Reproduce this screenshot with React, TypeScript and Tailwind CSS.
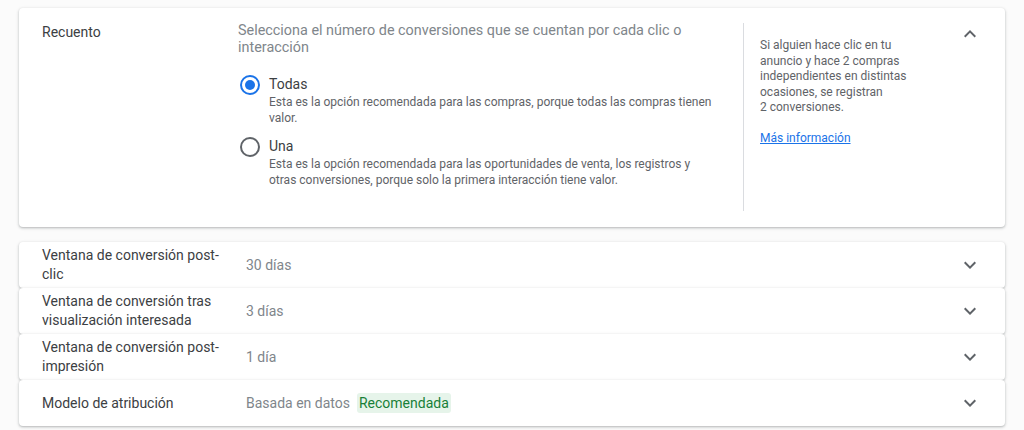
import React from 'react';

const cardShadow = 'shadow-[0_1px_2px_0_rgba(60,64,67,0.25),0_1px_3px_1px_rgba(60,64,67,0.1)]';

function ChevronDown() {
    return (
        <svg width="24" height="24" viewBox="0 0 24 24" className="text-[#5f6368]">
            <path d="M7.41 8.59 12 13.17l4.59-4.58L18 10l-6 6-6-6 1.41-1.41z" fill="currentColor" />
        </svg>
    );
}

function ChevronUp() {
    return (
        <svg width="24" height="24" viewBox="0 0 24 24" className="text-[#5f6368]">
            <path d="M7.41 15.41 12 10.83l4.59 4.58L18 14l-6-6-6 6z" fill="currentColor" />
        </svg>
    );
}

function Radio({ checked }: { checked: boolean }) {
    return (
        <div
            className={`w-[20px] h-[20px] rounded-full border-2 flex items-center justify-center shrink-0 ${checked ? 'border-[#1a73e8]' : 'border-[#5f6368]'}`}
        >
            {checked && <div className="w-[10px] h-[10px] rounded-full bg-[#1a73e8]" />}
        </div>
    );
}

interface RowProps {
    label: React.ReactNode;
    value: string;
    chip?: string;
}

function Row({ label, value, chip }: RowProps) {
    return (
        <div className={`flex items-center h-[46px] bg-white rounded-[4px] ${cardShadow}`}>
            <div className="w-[227px] pl-[23px] text-[14px] leading-[19px] text-[#3c4043]">{label}</div>
            <div className="flex-1 flex items-center text-[14px] text-[#80868b]">
                <span>{value}</span>
                {chip && (
                    <span className="ml-[7px] px-[2px] py-[2px] leading-[16px] rounded-[3px] bg-[#e6f4ea] text-[#188038]">{chip}</span>
                )}
            </div>
            <div className="pr-[23px] flex items-center">
                <ChevronDown />
            </div>
        </div>
    );
}

export default function App() {
    return (
        <div className="w-[1024px] h-[430px] bg-[#fbfbfb] px-[19px] pt-[8px] font-['Roboto',sans-serif] overflow-hidden">
            <div className={`flex h-[219px] bg-white rounded-[4px] ${cardShadow}`}>
                <div className="w-[219px] pl-[23px] pt-[14px] text-[14px] leading-[20px] text-[#3c4043]">Recuento</div>

                <div className="w-[505px] pt-[14px]">
                    <p className="text-[14.4px] leading-[17px] text-[#80868b]">
                        Selecciona el número de conversiones que se cuentan por cada clic o<br />interacción
                    </p>

                    <div className="mt-[18px] flex gap-[9px]">
                        <div className="pt-[1px] pl-[2px]"><Radio checked /></div>
                        <div>
                            <div className="text-[14px] leading-[20px] text-[#3c4043]">Todas</div>
                            <div className="text-[12px] leading-[16px] text-[#5f6368] whitespace-nowrap">
                                Esta es la opción recomendada para las compras, porque todas las compras tienen<br />valor.
                            </div>
                        </div>
                    </div>

                    <div className="mt-[10px] flex gap-[9px]">
                        <div className="pt-[1px] pl-[2px]"><Radio checked={false} /></div>
                        <div>
                            <div className="text-[14px] leading-[20px] text-[#3c4043]">Una</div>
                            <div className="text-[12px] leading-[16px] text-[#5f6368] whitespace-nowrap">
                                Esta es la opción recomendada para las oportunidades de venta, los registros y<br />otras conversiones, porque solo la primera interacción tiene valor.
                            </div>
                        </div>
                    </div>
                </div>

                <div className="mt-[15px] mb-[16px] w-px bg-[#dadce0]" />

                <div className="flex-1 pl-[16px] pt-[30px] text-[12px] leading-[15.5px] text-[#5f6368]">
                    <p>
                        Si alguien hace clic en tu<br />anuncio y hace 2 compras<br />independientes en distintas<br />ocasiones, se registran<br />2 conversiones.
                    </p>
                    <a href="#" className="inline-block mt-[15px] text-[#1a73e8] underline">Más información</a>
                </div>

                <div className="pr-[23px] pt-[14px]">
                    <ChevronUp />
                </div>
            </div>

            <div className="mt-[15px] flex flex-col">
                <Row label={<>Ventana de conversión post-<br />clic</>} value="30 días" />
                <Row label={<>Ventana de conversión tras<br />visualización interesada</>} value="3 días" />
                <Row label={<>Ventana de conversión post-<br />impresión</>} value="1 día" />
                <Row label="Modelo de atribución" value="Basada en datos" chip="Recomendada" />
            </div>
        </div>
    );
}
